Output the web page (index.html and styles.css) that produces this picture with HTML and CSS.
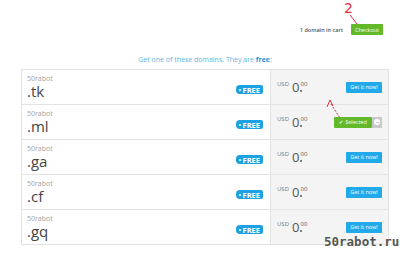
FILE: index.html
```html
<!DOCTYPE html>
<html lang="en">
<head>
    <meta charset="UTF-8">
    <title>Free domains</title>
    <link rel="stylesheet" href="styles.css">
</head>
<body>
    <div class="page">
        <div class="cart-bar">
            <span class="cart-count">1 domain in cart</span>
            <a class="btn btn-green btn-checkout">Checkout</a>
        </div>

        <div class="content">
            <p class="intro">Get one of these domains. They are <b>free</b>:</p>

            <div class="domains">
                <div class="domain-row">
                    <div class="name-cell">
                        <div class="name">
                            <span class="prefix">50rabot</span>
                            <span class="tld">.tk</span>
                        </div>
                        <span class="free-tag">FREE</span>
                    </div>
                    <div class="price-cell">
                        <span class="price"><span class="cur">USD</span><span class="amount">0</span><span class="cents">00</span></span>
                        <a class="btn btn-blue">Get it now!</a>
                    </div>
                </div>
                <div class="domain-row">
                    <div class="name-cell">
                        <div class="name">
                            <span class="prefix">50rabot</span>
                            <span class="tld">.ml</span>
                        </div>
                        <span class="free-tag">FREE</span>
                    </div>
                    <div class="price-cell">
                        <span class="price"><span class="cur">USD</span><span class="amount">0</span><span class="cents">00</span></span>
                        <span class="selected-group">
                            <a class="btn btn-green btn-selected"><span class="check">&#10004;</span>Selected</a>
                            <a class="btn-remove"><span class="minus"></span></a>
                        </span>
                    </div>
                </div>
                <div class="domain-row">
                    <div class="name-cell">
                        <div class="name">
                            <span class="prefix">50rabot</span>
                            <span class="tld">.ga</span>
                        </div>
                        <span class="free-tag">FREE</span>
                    </div>
                    <div class="price-cell">
                        <span class="price"><span class="cur">USD</span><span class="amount">0</span><span class="cents">00</span></span>
                        <a class="btn btn-blue">Get it now!</a>
                    </div>
                </div>
                <div class="domain-row">
                    <div class="name-cell">
                        <div class="name">
                            <span class="prefix">50rabot</span>
                            <span class="tld">.cf</span>
                        </div>
                        <span class="free-tag">FREE</span>
                    </div>
                    <div class="price-cell">
                        <span class="price"><span class="cur">USD</span><span class="amount">0</span><span class="cents">00</span></span>
                        <a class="btn btn-blue">Get it now!</a>
                    </div>
                </div>
                <div class="domain-row">
                    <div class="name-cell">
                        <div class="name">
                            <span class="prefix">50rabot</span>
                            <span class="tld">.gq</span>
                        </div>
                        <span class="free-tag">FREE</span>
                    </div>
                    <div class="price-cell">
                        <span class="price"><span class="cur">USD</span><span class="amount">0</span><span class="cents">00</span></span>
                        <a class="btn btn-blue">Get it now!</a>
                    </div>
                </div>
            </div>
        </div>

        <!-- hand-drawn annotations on top of the screenshot -->
        <span class="mark mark-two">2</span>
        <svg class="marks" width="400" height="255" viewBox="0 0 400 255">
            <line x1="350" y1="15" x2="357" y2="24" stroke="#e0303a" stroke-width="1"/>
            <polyline points="327,107 330,100 333,106" fill="none" stroke="#e0303a" stroke-width="1"/>
            <line x1="331" y1="104" x2="340" y2="118" stroke="#e0303a" stroke-width="1" stroke-dasharray="2 1.5"/>
        </svg>
        <span class="watermark">50rabot.ru</span>
    </div>
</body>
</html>
```

FILE: styles.css
```css
body {
    margin: 0;
    font-family: "Open Sans", "Liberation Sans", sans-serif;
    background: #fff;
    color: #555;
}
.page {
    position: relative;
    width: 400px;
    height: 255px;
    overflow: hidden;
}
.cart-bar {
    display: flex;
    justify-content: flex-end;
    align-items: center;
    gap: 8px;
    padding: 24px 17px 0 0;
}
.cart-count {
    font-size: 5.5px;
    font-weight: 600;
    color: #555;
}
.btn {
    display: inline-flex;
    align-items: center;
    justify-content: center;
    height: 11px;
    font-size: 5.5px;
    color: #fff;
    border-radius: 1px;
}
.btn-green {
    background: #63b929;
}
.btn-blue {
    width: 36px;
    background: #22a9ea;
}
.btn-checkout {
    width: 32px;
}
.content {
    margin: 0 11px 0 21px;
}
.intro {
    margin: 20px 0 4px;
    font-size: 7px;
    line-height: 10px;
    text-align: center;
    color: #61b6e2;
}
.intro b {
    color: #1b98d8;
}
.domains {
    border: 1px solid #e3e3e3;
    border-bottom: none;
}
.domain-row {
    display: grid;
    grid-template-columns: 248px 1fr;
    height: 34px;
    border-bottom: 1px solid #e3e3e3;
}
.name-cell {
    display: flex;
    justify-content: space-between;
    padding: 5px 7px 0 5px;
}
.name {
    display: flex;
    flex-direction: column;
}
.prefix {
    font-size: 7px;
    line-height: 8px;
    color: #a3a3a3;
}
.tld {
    font-size: 15px;
    line-height: 16px;
    color: #444;
}
.free-tag {
    align-self: center;
    display: inline-flex;
    align-items: center;
    gap: 2px;
    height: 9px;
    padding: 0 3px 0 3px;
    background: #1ca2e2;
    border-radius: 4px 2px 2px 4px;
    font-size: 7.5px;
    font-weight: bold;
    color: #fff;
}
.free-tag::before {
    content: "";
    width: 2px;
    height: 2px;
    border-radius: 50%;
    background: #fff;
}
.price-cell {
    display: flex;
    align-items: center;
    justify-content: space-between;
    padding: 0 6px;
    background: #f4f4f4;
    border-left: 1px solid #e3e3e3;
}
.price {
    display: flex;
    align-items: flex-start;
    color: #555;
}
.cur {
    font-size: 6px;
    line-height: 6px;
    margin-right: 3px;
    color: #777;
}
.amount {
    font-size: 13px;
    line-height: 12px;
}
.cents {
    position: relative;
    margin-left: 1px;
    font-size: 6px;
    line-height: 6px;
}
/* decimal point sits under the cents */
.cents::after {
    content: "";
    position: absolute;
    left: 0;
    top: 9px;
    width: 2px;
    height: 2px;
    border-radius: 50%;
    background: #555;
}
.selected-group {
    display: flex;
}
.btn-selected {
    width: 38px;
    gap: 2px;
}
.check {
    font-size: 5px;
}
.btn-remove {
    display: flex;
    align-items: center;
    justify-content: center;
    width: 10px;
    height: 11px;
    background: #c9c9c9;
}
.minus {
    width: 6px;
    height: 6px;
    border-radius: 50%;
    background: #fff;
    position: relative;
}
.minus::after {
    content: "";
    position: absolute;
    left: 1.5px;
    top: 2.5px;
    width: 3px;
    height: 1px;
    background: #c9c9c9;
}
.marks {
    position: absolute;
    left: 0;
    top: 0;
    pointer-events: none;
}
.mark-two {
    position: absolute;
    left: 344px;
    top: 0;
    font-family: "DejaVu Sans", sans-serif;
    font-size: 14px;
    line-height: 16px;
    color: #e0303a;
}
.watermark {
    position: absolute;
    left: 324px;
    top: 234px;
    font-family: "DejaVu Sans Mono", monospace;
    font-size: 12.5px;
    font-weight: bold;
    line-height: 16px;
    color: #555;
    text-shadow: 0 0 2px #fff, 0 0 1px #fff;
}
```
